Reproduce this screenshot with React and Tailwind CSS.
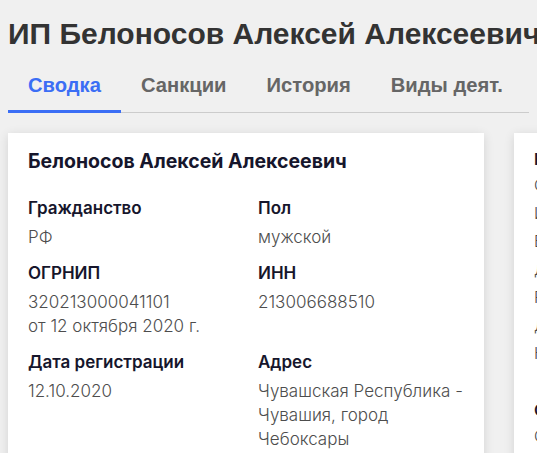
import React from "react";

const fields = [
  { label: "Гражданство", lines: ["РФ"] },
  { label: "Пол", lines: ["мужской"] },
  { label: "ОГРНИП", lines: ["320213000041101", "от 12 октября 2020 г."] },
  { label: "ИНН", lines: ["213006688510"] },
  { label: "Дата регистрации", lines: ["12.10.2020"] },
  { label: "Адрес", lines: ["Чувашская Республика -", "Чувашия, город", "Чебоксары"] },
];

const tabs = ["Сводка", "Санкции", "История", "Виды деят."];

const sideLinks = [
  "Общая система",
  "Инспекция ФНС",
  "Выписка из ЕГРИП",
  "Деятельность",
  "Реестр МСП",
  "Дата постановки",
  "Налоговые режимы",
];

function Field({ label, lines }) {
  return (
    <div className="flex flex-col gap-[5px]">
      <div className="text-[17px] leading-6 font-semibold text-[#16162c]">{label}</div>
      <div className="text-[17px] leading-6 font-light text-[#4d4d4d]">
        {lines.map((l) => (
          <div key={l}>{l}</div>
        ))}
      </div>
    </div>
  );
}

export default function App() {
  return (
    <div className="min-h-[453px] w-[537px] overflow-hidden bg-[#f0f0f0]">
      <div className="px-2 pt-[17px]">
        <h1 className="whitespace-nowrap font-['Liberation_Sans',Arial,sans-serif] text-[30px] leading-[34px] font-bold text-[#333333]">
          ИП Белоносов Алексей Алексеевич
        </h1>
        <nav className="mt-[22px] flex border-b border-[#cccccc] font-['Liberation_Sans',Arial,sans-serif] text-[20.2px] leading-6 font-bold">
          {tabs.map((t, i) => (
            <div
              key={t}
              className={
                i === 0
                  ? "-mb-px whitespace-nowrap border-b-[3px] border-[#3b6ef5] px-5 pb-[13px] text-[#3b6ef5]"
                  : "-mb-px whitespace-nowrap border-b-[3px] border-transparent px-5 pb-[13px] text-[#666666]"
              }
            >
              {t}
            </div>
          ))}
        </nav>
        <div className="mt-5 flex gap-[30px] font-['Inter',sans-serif]">
          <section className="w-[476px] shrink-0 bg-white px-5 pt-4 pb-6 shadow-[0_2px_10px_rgba(0,0,0,0.12)]">
            <h2 className="whitespace-nowrap text-[19.5px] leading-6 font-bold text-[#16162c]">
              Белоносов Алексей Алексеевич
            </h2>
            <div className="mt-[23px] grid grid-cols-2 gap-x-6 gap-y-3">
              {fields.map((f) => (
                <Field key={f.label} {...f} />
              ))}
            </div>
          </section>
          <section className="w-[300px] shrink-0 bg-white px-5 pt-[14px] shadow-[0_2px_10px_rgba(0,0,0,0.12)]">
            <div className="text-[16px] leading-6 font-semibold text-[#16162c]">Налоговый орган</div>
            {sideLinks.map((s) => (
              <div key={s} className="whitespace-nowrap text-[16px] leading-7 font-light text-[#4d4d4d]">
                {s}
              </div>
            ))}
            <div className="mt-[31px] text-[16px] leading-6 font-semibold text-[#16162c]">Связи</div>
            <div className="text-[16px] leading-7 font-light text-[#4d4d4d]">Отсутствуют</div>
          </section>
        </div>
      </div>
    </div>
  );
}
